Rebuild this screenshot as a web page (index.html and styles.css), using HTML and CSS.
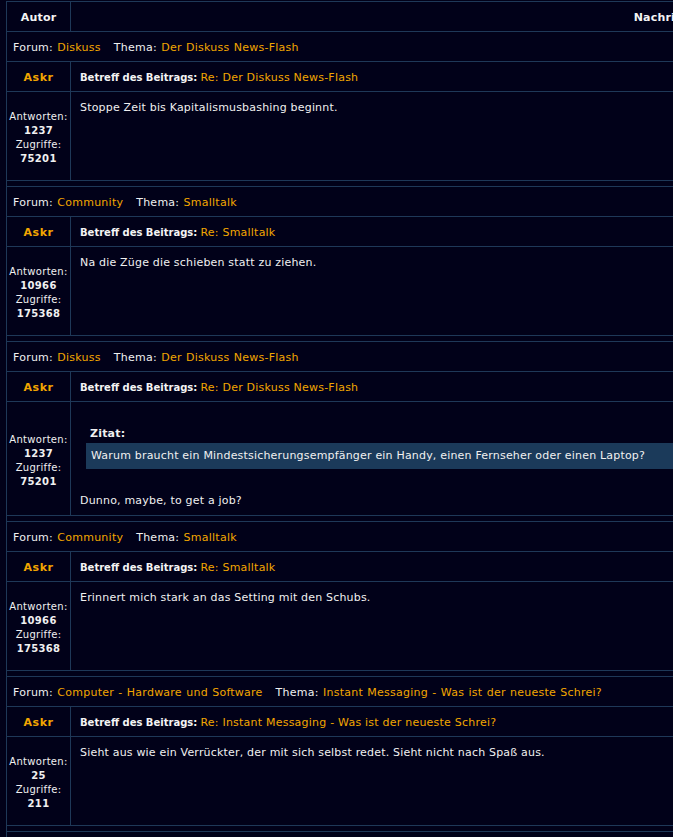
FILE: index.html
```html
<!DOCTYPE html>
<html lang="de">
<head>
<meta charset="utf-8">
<title>Suchergebnisse</title>
<link rel="stylesheet" href="styles.css">
</head>
<body>
<table class="forumline">
  <tr>
    <th class="th-author">Autor</th>
    <th class="th-msg">Nachricht</th>
  </tr>

  <tr><td class="cat" colspan="2">Forum:&nbsp;<a href="#">Diskuss</a>&nbsp;&nbsp;&nbsp;Thema:&nbsp;<a href="#">Der Diskuss News-Flash</a></td></tr>
  <tr>
    <td class="name">Askr</td>
    <td class="subject"><b>Betreff des Beitrags:</b> <a href="#">Re: Der Diskuss News-Flash</a></td>
  </tr>
  <tr>
    <td class="stats">Antworten:<br><b>1237</b><br>Zugriffe:<br><b>75201</b></td>
    <td class="post"><div class="line">Stoppe Zeit bis Kapitalismusbashing beginnt.</div></td>
  </tr>
  <tr><td class="space" colspan="2"></td></tr>

  <tr><td class="cat" colspan="2">Forum:&nbsp;<a href="#">Community</a>&nbsp;&nbsp;&nbsp;Thema:&nbsp;<a href="#">Smalltalk</a></td></tr>
  <tr>
    <td class="name">Askr</td>
    <td class="subject"><b>Betreff des Beitrags:</b> <a href="#">Re: Smalltalk</a></td>
  </tr>
  <tr>
    <td class="stats">Antworten:<br><b>10966</b><br>Zugriffe:<br><b>175368</b></td>
    <td class="post"><div class="line">Na die Züge die schieben statt zu ziehen.</div></td>
  </tr>
  <tr><td class="space" colspan="2"></td></tr>

  <tr><td class="cat" colspan="2">Forum:&nbsp;<a href="#">Diskuss</a>&nbsp;&nbsp;&nbsp;Thema:&nbsp;<a href="#">Der Diskuss News-Flash</a></td></tr>
  <tr>
    <td class="name">Askr</td>
    <td class="subject"><b>Betreff des Beitrags:</b> <a href="#">Re: Der Diskuss News-Flash</a></td>
  </tr>
  <tr>
    <td class="stats">Antworten:<br><b>1237</b><br>Zugriffe:<br><b>75201</b></td>
    <td class="post">
      <div class="quote-wrap">
        <div class="quote-label">Zitat:</div>
        <div class="quote">Warum braucht ein Mindestsicherungsempfänger ein Handy, einen Fernseher oder einen Laptop?</div>
      </div>
      <div class="line after-quote">Dunno, maybe, to get a job?</div>
    </td>
  </tr>
  <tr><td class="space" colspan="2"></td></tr>

  <tr><td class="cat" colspan="2">Forum:&nbsp;<a href="#">Community</a>&nbsp;&nbsp;&nbsp;Thema:&nbsp;<a href="#">Smalltalk</a></td></tr>
  <tr>
    <td class="name">Askr</td>
    <td class="subject"><b>Betreff des Beitrags:</b> <a href="#">Re: Smalltalk</a></td>
  </tr>
  <tr>
    <td class="stats">Antworten:<br><b>10966</b><br>Zugriffe:<br><b>175368</b></td>
    <td class="post"><div class="line">Erinnert mich stark an das Setting mit den Schubs.</div></td>
  </tr>
  <tr><td class="space" colspan="2"></td></tr>

  <tr><td class="cat" colspan="2">Forum:&nbsp;<a href="#">Computer - Hardware und Software</a>&nbsp;&nbsp;&nbsp;Thema:&nbsp;<a href="#">Instant Messaging - Was ist der neueste Schrei?</a></td></tr>
  <tr>
    <td class="name">Askr</td>
    <td class="subject"><b>Betreff des Beitrags:</b> <a href="#">Re: Instant Messaging - Was ist der neueste Schrei?</a></td>
  </tr>
  <tr>
    <td class="stats">Antworten:<br><b>25</b><br>Zugriffe:<br><b>211</b></td>
    <td class="post"><div class="line">Sieht aus wie ein Verrückter, der mit sich selbst redet. Sieht nicht nach Spaß aus.</div></td>
  </tr>
  <tr><td class="space" colspan="2"></td></tr>

  <tr><td class="cat" colspan="2">&nbsp;</td></tr>
</table>
</body>
</html>
```

FILE: styles.css
```css
html, body {
  margin: 0;
  padding: 0;
  background: #010119;
  overflow: hidden;
}

body {
  padding: 1px 0 0 6px;
  font-family: "DejaVu Sans", Verdana, sans-serif;
  color: #f0f0f0;
}

.forumline {
  width: 1253px;
  border-collapse: separate;
  border-spacing: 1px;
  background: #1e3858;
}

.forumline td,
.forumline th {
  background: #010119;
  padding: 0;
}

a {
  color: #f2a600;
  text-decoration: none;
}

.forumline th {
  height: 28px;
  padding-top: 1px;
  font-size: 11px;
  font-weight: bold;
  color: #f4f4f4;
  text-align: center;
  vertical-align: middle;
  letter-spacing: 0.2px;
}

.th-author {
  width: 63px;
}

.forumline .cat {
  height: 28px;
  padding: 1px 6px 0;
  font-size: 11px;
  line-height: 13px;
  letter-spacing: 0.24px;
  word-spacing: 0.6px;
  vertical-align: middle;
  white-space: nowrap;
}

.forumline .name {
  height: 28px;
  padding-top: 1px;
  text-align: center;
  vertical-align: middle;
  font-size: 11px;
  font-weight: bold;
  letter-spacing: 0.5px;
  color: #f2a600;
}

.forumline .subject {
  padding: 1px 9px 0;
  vertical-align: middle;
  font-size: 10px;
  white-space: nowrap;
}

.subject b {
  color: #f4f4f4;
}

.subject a {
  font-size: 11px;
  letter-spacing: 0.22px;
}

.forumline .stats {
  padding: 18px 0 14px;
  text-align: center;
  vertical-align: middle;
  font-size: 10px;
  line-height: 14px;
  letter-spacing: 0.3px;
}

.forumline .post {
  padding: 7px 9px 5px;
  vertical-align: top;
  font-size: 11px;
  line-height: 18px;
  letter-spacing: 0.19px;
  white-space: nowrap;
}

.line {
  height: 18px;
}

.quote-wrap {
  margin: 18px 6px 0;
}

.quote-label {
  font-weight: bold;
  line-height: 14px;
  padding-left: 4px;
  margin-bottom: 2px;
}

.quote {
  background: #1b3a5a;
  padding: 4px 5px;
  line-height: 18px;
}

.after-quote {
  margin-top: 23px;
}

.space {
  height: 5px;
}
```
